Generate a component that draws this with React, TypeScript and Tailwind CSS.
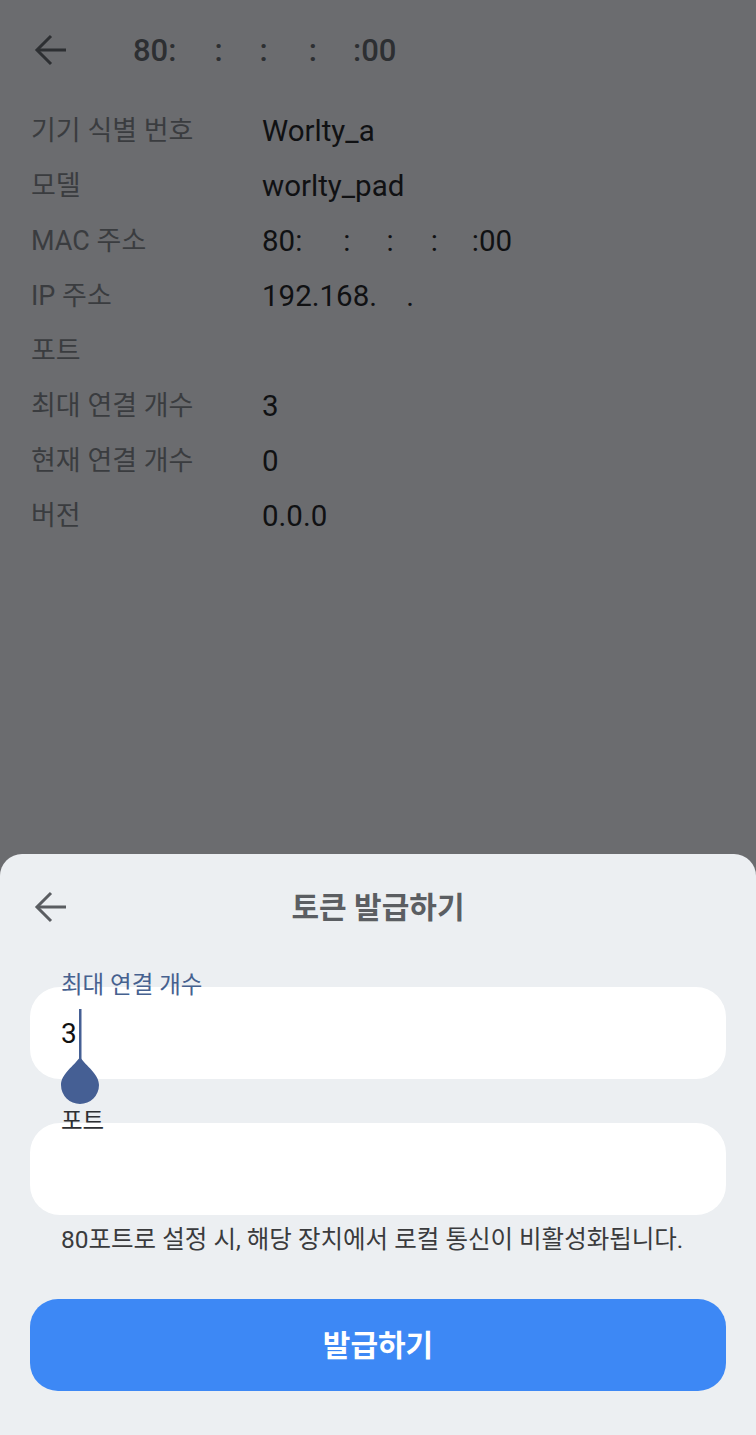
import React from "react";

const font = { fontFamily: 'Roboto, "Noto Sans CJK KR", sans-serif' };

function BackArrow({ color }: { color: string }) {
  return (
    <svg width="34" height="32" viewBox="0 0 34 32" fill="none">
      <path d="M32 16H3" stroke={color} strokeWidth="3" strokeLinecap="butt" />
      <path d="M17 2L3 16L17 30" stroke={color} strokeWidth="3" strokeLinecap="butt" strokeLinejoin="miter" fill="none" />
    </svg>
  );
}

const rows: [string, string][] = [
  ["기기 식별 번호", "Worlty_a"],
  ["모델", "worlty_pad"],
  ["MAC 주소", "mac"],
  ["IP 주소", "192.168.    ."],
  ["포트", ""],
  ["최대 연결 개수", "3"],
  ["현재 연결 개수", "0"],
  ["버전", "0.0.0"],
];

function HeaderMac() {
  return (
    <div className="flex items-center ml-[65px] text-[31px] font-medium text-[#2d2f32] pt-[2px]">
      <span>80:</span>
      <span className="ml-[38px]">:</span>
      <span className="ml-[37px]">:</span>
      <span className="ml-[41px]">:</span>
      <span className="ml-[36px]">:00</span>
    </div>
  );
}

function ValueMac() {
  return (
    <div className="flex items-center text-[29.5px] text-[#101113]">
      <span>80:</span>
      <span className="ml-[41px]">:</span>
      <span className="ml-[36px]">:</span>
      <span className="ml-[37px]">:</span>
      <span className="ml-[34px]">:00</span>
    </div>
  );
}

export default function App() {
  return (
    <div style={font} className="h-[1435px] w-[756px] bg-[#6b6c6f] flex flex-col overflow-hidden">
      {/* header */}
      <div className="h-[100px] flex items-center pl-[34px] shrink-0">
        <BackArrow color="#2d2f32" />
        <HeaderMac />
      </div>
      {/* info rows */}
      <div className="flex flex-col pl-[31px] shrink-0 pt-[4px]">
        {rows.map(([k, v]) => (
          <div key={k} className="h-[55px] flex items-center">
            <div className="w-[231px] text-[27px] text-[#3a3c3f]">{k}</div>
            {v === "mac" ? (
              <ValueMac />
            ) : (
              <div className="text-[29.5px] text-[#101113] whitespace-pre">{v}</div>
            )}
          </div>
        ))}
      </div>
      <div className="flex-1" />
      {/* bottom sheet */}
      <div className="h-[581px] shrink-0 bg-[#eceff2] rounded-t-[22px] px-[30px] pt-[25px] flex flex-col">
        <div className="relative h-[56px] flex items-center justify-center">
          <div className="absolute left-[4px] top-[12px]">
            <BackArrow color="#5a5d61" />
          </div>
          <div className="text-[30px] font-bold text-[#5b5e62]">토큰 발급하기</div>
        </div>

        <div className="relative mt-[52px]">
          <div className="absolute left-[31px] -top-[17px] z-10 text-[23.5px] leading-[30px] text-[#46618f]">최대 연결 개수</div>
          <div className="h-[92px] rounded-[30px] bg-white flex items-center pl-[31px]">
            <span className="text-[28px] text-[#111] pt-[2px]">3</span>
          </div>
          <svg className="absolute left-[30px] top-[21px] z-10" width="40" height="100" viewBox="0 0 40 100">
            <rect x="19" y="1" width="2.5" height="52" fill="#455f94" />
            <path d="M20 49 C 26 58, 39 66, 39 77 A19 19 0 0 1 1 77 C 1 66, 14 58, 20 49 Z" fill="#455f94" />
          </svg>
        </div>

        <div className="relative mt-[44px]">
          <div className="absolute left-[31px] -top-[17px] z-10 text-[23.5px] leading-[30px] text-[#2e3033]">포트</div>
          <div className="h-[92px] rounded-[30px] bg-white" />
        </div>

        <div className="mt-[10px] pl-[31px] text-[24.5px] leading-[30px] text-[#3a3b3d] whitespace-nowrap">
          80포트로 설정 시, 해당 장치에서 로컬 통신이 비활성화됩니다.
        </div>

        <div className="mt-[44px] h-[92px] rounded-[28px] bg-[#3d88f5] flex items-center justify-center">
          <span className="text-[30px] font-bold text-white">발급하기</span>
        </div>
      </div>
    </div>
  );
}
